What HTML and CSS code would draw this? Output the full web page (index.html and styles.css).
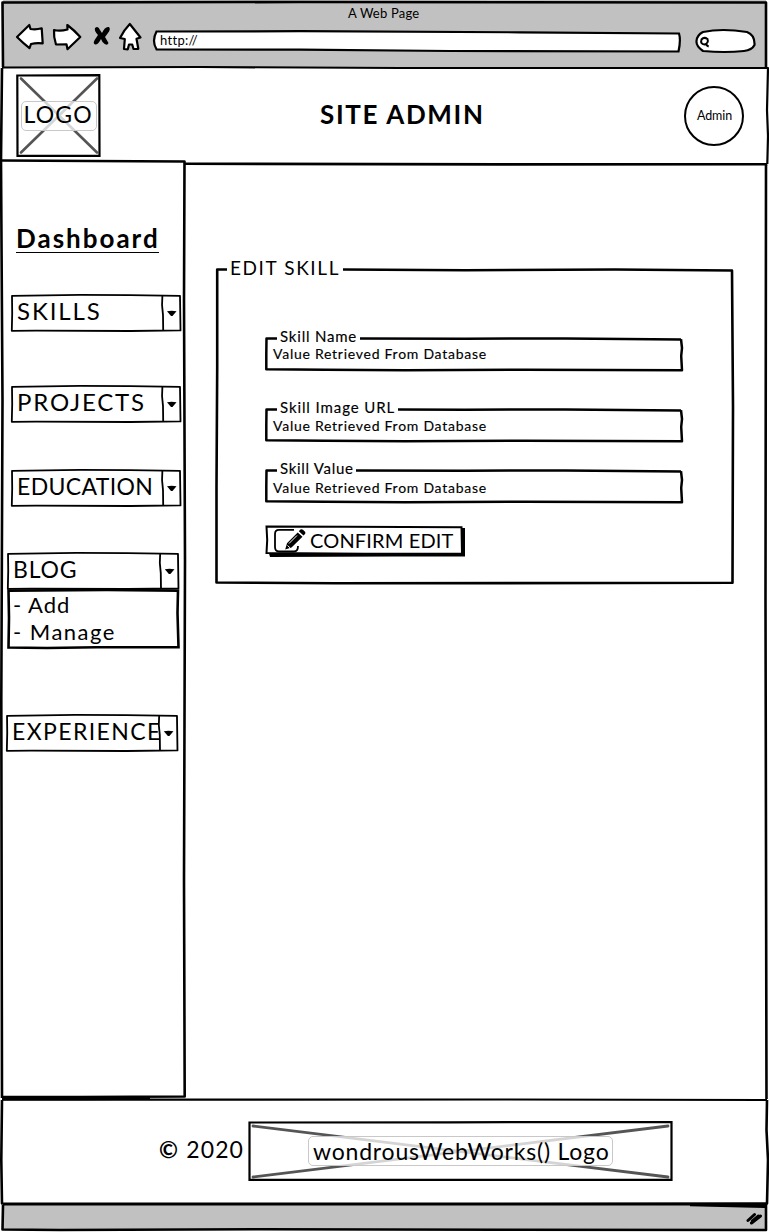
FILE: index.html
```html
<!DOCTYPE html>
<html lang="en">
<head>
<meta charset="utf-8">
<title>A Web Page</title>
<link rel="stylesheet" href="styles.css">
</head>
<body>
<svg class="defs" width="0" height="0">
  <defs>
    <symbol id="select" viewBox="0 0 172 40" preserveAspectRatio="none">
      <path d="M2 2.8L70 1.9 120 2.2 170 2.8 170.500 37.4 120 38 26 37.6 1.8 37.8 2.2 20ZM152.4 2.5Q151.4 12 153 22L153.2 37.5" fill="none" stroke="#000" stroke-width="1.8" stroke-linejoin="round"/>
      <path d="M157 18.3Q161.500 17 166.500 18.300L162.500 23H161Z"/>
    </symbol>
    <symbol id="field" viewBox="0 0 420 36">
      <path d="M12 2.500H1.500L1.300 18 1.300 33.200 60 33.700 140 34.300 260 33.700 417 34.200 416.200 20 417 12 416 3.200" fill="none" stroke="#000" stroke-width="2.500" stroke-linejoin="round"/>
    </symbol>
  </defs>
</svg>
<div class="browser">
  <svg class="outline" width="769" height="1232" viewBox="0 0 769 1232">
    <g fill="none" stroke="#000" stroke-width="2.600" stroke-linejoin="round">
      <path d="M3 67L2.500 2.500 300 2 766 2.500 766 67"/>
      <path d="M2 67.500L200 67 400 68 768 68 767 110 768 136 767.300 164" stroke-width="2.200"/>
      <path d="M767.300 164.300L500 164.400 185 163.700"/>
      <path d="M2 68L1 160 2.500 400 1.300 700 2 1098"/>
      <path d="M1 160.500L90 161 184.500 161.500 184 300 185 560 184 880 184.700 1096.500 80 1097 2 1097"/>
      <path d="M766 165L765.500 600 766.500 1099"/>
      <path d="M2 1099.700H140L500 1099.500 767 1100" stroke-width="2.200"/>
      <path d="M767 1100L766.500 1130 768 1160 767 1203.500 380 1203.800 2 1203.500 1.300 1160 2 1100"/>
      <path d="M3 1205L2.500 1229.500 60 1230 260 1229.300 500 1229.800 766 1230V1204"/>
      <path d="M2 1099H80L150 1098.500M3 1204.300H766M690 1205L766 1206.800"/>
    </g>
  </svg>

  <header class="chrome">
    <div class="chrome-title"><span class="t-title">A Web Page</span></div>
    <div class="toolbar">
      <svg class="nav-icons" width="130" height="30" viewBox="14 22 130 30">
        <g fill="#fff" stroke="#000" stroke-width="2.200" stroke-linejoin="round">
          <path d="M17 37L29.300 25 30.500 29Q36 30 41.700 28.300L42.700 43.300Q36 42.600 31 44L29.500 48.200Q23 43 17 37Z"/>
          <path d="M54 30Q60 31.500 67.500 29.500L67.300 25Q74 30 80.300 37L67.500 49.200 66.500 44.300 56 44.500Q53.500 37 54 30Z"/>
          <path d="M129.800 24L140.500 37.500 136.500 38.700 138.300 48.800 133.500 49 132.200 44.500H129L127.800 49.300 124 49 124.800 39 120 38Q124 30 129.800 24Z"/>
        </g>
        <path d="M95 28Q98 25 100 30L102 33Q105 26 109 27Q111 29 108 33L105 37 108.500 43Q107 47 102.500 42L101 39Q98 45 95 44.500Q92 43 96 38L98 35Q94 31 95 28Z"/>
      </svg>
      <div class="url">
        <svg class="frame" viewBox="152 29 531 25"><path d="M156.500 31.500L300 31.200 520 32.300 679 33.500Q681 40 678.500 51.500L450 51 300 49.700 156.500 49.300Q151.500 41 156.500 31.500Z" fill="#fff" stroke="#000" stroke-width="2.200"/></svg>
        <span class="t-url">http://</span>
      </div>
      <svg class="search" width="64" height="26" viewBox="694 28 64 26">
        <path d="M703 32Q722 28 747 32Q755 35 754.500 45Q752 50 744 51Q725 53 703 51Q696 46 696.500 41Q697 35 703 32Z" fill="#fff" stroke="#000" stroke-width="2.200"/>
        <path d="M701.500 39.500Q704 36.500 707.500 39Q709 43 704.500 44.500Q700 44 701.500 39.500ZM706 44Q707 46 708.700 46.500" fill="none" stroke="#000" stroke-width="2"/>
      </svg>
    </div>
  </header>

  <div class="site-header">
    <div class="logo picture">
      <svg class="frame" viewBox="0 0 85 83"><path d="M5 4.500L81 78.500M81 4.500L5 78.500" stroke="#555" stroke-width="2.600" stroke-linecap="round"/><path d="M1.300 1.500L83.300 1.200 83.500 81.800 1.500 81.800Z" fill="none" stroke="#000" stroke-width="2.200"/></svg>
      <span class="caption t-logo">LOGO</span>
    </div>
    <h1 class="t-h1">SITE ADMIN</h1>
    <div class="avatar"><span class="t-admin">Admin</span></div>
  </div>

  <div class="main">
    <nav class="sidebar">
      <h2><span class="t-dash">Dashboard</span></h2>
      <div class="select skills"><svg class="frame"><use href="#select"/></svg><span class="t-skills">SKILLS</span></div>
      <div class="select projects"><svg class="frame"><use href="#select"/></svg><span class="t-projects">PROJECTS</span></div>
      <div class="select education"><svg class="frame"><use href="#select"/></svg><span class="t-education">EDUCATION</span></div>
      <div class="select blog"><svg class="frame"><use href="#select"/></svg><span class="t-blog">BLOG</span></div>
      <div class="options">
        <svg class="frame" viewBox="0 0 174 62"><path d="M1.500 2.600L100 2 171 2.600 170.500 25 171.500 59.300 90 59.300 40 60 1.500 59.500 2 30Z" fill="none" stroke="#000" stroke-width="2.600"/></svg>
        <span class="t-add">- Add</span>
        <span class="t-manage">- Manage</span>
      </div>
      <div class="select experience"><svg class="frame"><use href="#select"/></svg><span class="t-experience">EXPERIENCE</span></div>
    </nav>

    <main class="content">
      <section class="panel">
        <svg class="frame" viewBox="0 0 520 318"><path d="M12 2.500H2.200L2.200 100 1.500 220 1.500 315.500 120 316.300 517.500 315.800 518 140 517 3.500 400 2.500 250 3.300 128 2.500" fill="none" stroke="#000" stroke-width="2.600" stroke-linejoin="round"/></svg>
        <div class="legend"><span class="t-legend">EDIT SKILL</span></div>
        <div class="field f1">
          <svg class="frame"><use href="#field"/><path d="M95 2.500L200 2.700 300 2.500 416 3.400" class="rule"/></svg>
          <label class="t-name">Skill Name</label><span class="value">Value Retrieved From Database</span>
        </div>
        <div class="field f2">
          <svg class="frame"><use href="#field"/><path d="M133 2.500L200 2.700 300 2.500 416 3.400" class="rule"/></svg>
          <label class="t-image">Skill Image URL</label><span class="value">Value Retrieved From Database</span>
        </div>
        <div class="field f3">
          <svg class="frame"><use href="#field"/><path d="M91 2.500L200 2.700 300 2.500 416 3.400" class="rule"/></svg>
          <label class="t-value">Skill Value</label><span class="value">Value Retrieved From Database</span>
        </div>
        <button class="confirm" type="button">
          <svg class="frame" viewBox="0 0 201 32"><path d="M4 28.500L196 28 196.500 3H200V31.500H130L5 32Z"/><path d="M1.500 1.600L80 1.800 196.500 2.300 197 28.500 100 28.700 1.500 28 2.200 15Z" fill="#fff" stroke="#000" stroke-width="2"/></svg>
          <svg class="edit" width="34" height="26" viewBox="0 0 34 26">
            <path d="M22 2.800H7Q3 2.800 3 7V20Q3 24.500 7 24.500H22Q26 24.500 26 19" fill="none" stroke="#000" stroke-width="1.800"/>
            <path d="M25.700 5.500L30.500 9.700 19.500 20.500 13.200 22.500 15 16.300ZM26.800 4.300L28.400 2.600Q29.500 1.600 31 2.800L33 4.800Q34 6 33 7L31.500 8.600Z"/>
            <path d="M17 16.500L25 8.500M15.500 18.500L18 20.800" stroke="#fff" stroke-width="1"/>
          </svg>
          <span class="t-confirm">CONFIRM EDIT</span>
        </button>
      </section>
    </main>
  </div>

  <footer class="footer">
    <span class="t-copy"><b>©</b> 2020</span>
    <div class="footer-logo picture">
      <svg class="frame" viewBox="0 0 425 60"><path d="M5 5L420 56M420 5L5 56" stroke="#555" stroke-width="2.800" stroke-linecap="round"/><path d="M1.500 1.500L200 1.300 423.500 1 423.500 58.800 1.500 58.800Z" fill="none" stroke="#000" stroke-width="2.200"/></svg>
      <span class="caption t-works">wondrousWebWorks() Logo</span>
    </div>
  </footer>
  <div class="status">
    <svg width="18" height="14" viewBox="745 1212 18 14"><path d="M748 1221.500L754.500 1215.500M751.500 1224L760.500 1217M752.500 1222L758.500 1217" stroke="#000" stroke-width="3" stroke-linecap="round"/></svg>
  </div>
</div>
</body>
</html>
```
FILE: styles.css
```css
* { box-sizing: border-box; }
body { margin: 0; background: #fff; color: #000; font-family: Lato, "Open Sans", sans-serif; }
.defs { position: absolute; }
h1, h2 { margin: 0; }
.browser { position: relative; width: 769px; height: 1232px; overflow: hidden; display: flex; flex-direction: column; }
.outline { position: absolute; left: 0; top: 0; z-index: 3; pointer-events: none; }
.frame { position: absolute; left: 0; top: 0; width: 100%; height: 100%; }
span, label, h1 { white-space: nowrap; }

.chrome { height: 68px; margin: 0 3px; background: #c1c1c1; flex: none; }
.chrome-title { height: 22px; padding: 5px 0 0 345px; font-size: 13px; line-height: 17px; }
.toolbar { display: flex; padding-left: 11px; }
.nav-icons { flex: none; }
.url { position: relative; width: 531px; height: 25px; margin: 7px 0 0 8px; flex: none; padding-left: 8px; font-size: 13px; line-height: 23px; }
.url span { position: relative; }
.search { margin: 6px 0 0 11px; flex: none; }

.site-header { height: 93px; flex: none; display: flex; align-items: flex-start; padding-top: 6px; }
.picture { position: relative; display: flex; align-items: center; justify-content: center; flex: none; }
.logo { width: 85px; height: 83px; margin-left: 16px; font-size: 23px; }
.caption { position: relative; border: 1px solid #c8c8c8; border-radius: 5px; background: rgba(255, 255, 255, .75); line-height: 28px; height: 30px; }
.logo .caption { width: 76px; padding-left: 2px; line-height: 25px; }
.site-header h1 { width: 364px; padding-left: 219px; margin-top: 24px; font-size: 26px; line-height: 32px; font-weight: 700; }
.avatar { width: 60px; height: 60px; margin: 12px 0 0 219px; border: 2px solid #000; border-radius: 50%; font-size: 12.5px; line-height: 55px; padding-left: 11px; flex: none; }

.main { height: 938px; flex: none; display: flex; }
.sidebar { width: 185px; flex: none; background: #fff; }
.sidebar h2 { width: 143px; height: 31px; margin: 61px 0 0 16px; border-bottom: 1px solid #000; font-size: 26px; line-height: 33px; font-weight: 700; }
.select { position: relative; width: 172px; height: 40px; font-size: 23px; line-height: 36px; padding-left: 7px; }
.select span { position: relative; display: block; width: 145px; overflow: hidden; }
.skills { margin: 40px 0 0 10px; }
.projects { margin: 51px 0 0 10px; }
.education { margin: 44px 0 0 10px; }
.blog { width: 174px; margin: 43px 0 0 6px; }
.experience { width: 174px; margin: 63px 0 0 5px; }
.select.experience span { width: 147px; }
.options { position: relative; width: 174px; height: 62px; margin: -3px 0 0 7px; padding: 3px 0 0 6px; font-size: 22px; line-height: 27px; display: flex; flex-direction: column; }
.options span { position: relative; }

.content { flex: 1; padding: 106px 0 0 30px; }
.panel { position: relative; width: 520px; height: 318px; margin-left: 0; display: flex; flex-direction: column; }
.legend { position: relative; height: 24px; padding: 0 0 0 15px; font-size: 19px; line-height: 23px; top: -11px; }
.panel .frame { pointer-events: none; }
.field { position: relative; width: 420px; height: 36px; margin-left: 50px; display: flex; flex-direction: column; padding-left: 15px; flex: none; }
.field label { position: relative; font-size: 15px; line-height: 18px; margin-top: -9px; }
.field .value { position: relative; font-size: 14px; line-height: 18px; margin-left: -7px; letter-spacing: .74px; }
.field label, .field .value { -webkit-text-stroke: .15px #000; }
.rule { fill: none; stroke: #000; stroke-width: 2.5; }
.f1 { margin-top: 45px; }
.f2 { margin-top: 35px; }
.f3 { margin-top: 25px; }
.f2 .value { padding-top: 1px; }
.f3 .value { padding-top: 2px; }
.confirm { position: relative; display: flex; width: 201px; height: 32px; margin: 21px 0 0 50px; padding: 0; border: 0; background: none; color: #000; font: 20px/31px Lato, sans-serif; flex: none; }
.edit { position: relative; margin: 2px 0 0 7px; flex: none; }
.confirm span { position: relative; margin-left: 4px; }

.footer { height: 105px; flex: none; display: flex; align-items: flex-start; padding: 22px 0 0 159px; }
.t-copy { width: 89px; font-size: 23px; line-height: 57px; flex: none; }
.footer-logo { width: 425px; height: 60px; font-size: 23px; }
.footer-logo .caption { width: 305px; padding-left: 4px; }
.status { height: 26px; margin: 0 3px; background: #c1c1c1; padding: 7px 0 0 742px; }
.status svg { display: block; }

.t-title { letter-spacing: .2px; }
.t-url { letter-spacing: .3px; }
.t-logo { letter-spacing: 1.2px; }
.t-h1 { letter-spacing: 1.65px; }
.t-admin { letter-spacing: -.1px; }
.t-dash { letter-spacing: 2px; }
.select .t-skills { letter-spacing: 1.9px; font-size: 24px; }
.select .t-projects { letter-spacing: 1.8px; font-size: 24px; }
.t-education { letter-spacing: .35px; }
.t-blog { letter-spacing: .8px; }
.t-experience { letter-spacing: 1.4px; }
.t-add { letter-spacing: 1px; }
.t-manage { letter-spacing: 1.5px; }
.t-legend { letter-spacing: 1.6px; }
.t-name { letter-spacing: .8px; }
.t-image { letter-spacing: .9px; }
.t-value { letter-spacing: .7px; }
.t-confirm { letter-spacing: .15px; }
.t-works { letter-spacing: .8px; }
.t-copy { letter-spacing: 1.15px; }
```
